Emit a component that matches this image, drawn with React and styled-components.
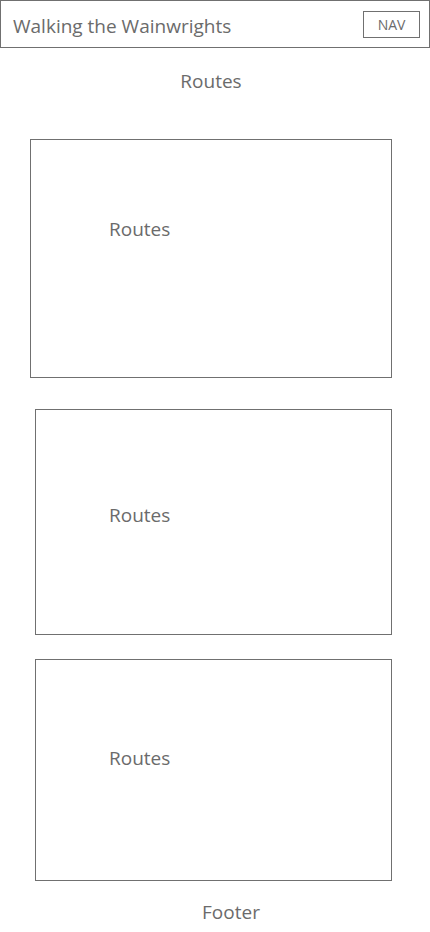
import React from "react";
import styled, { createGlobalStyle } from "styled-components";

const Global = createGlobalStyle`
  html, body { margin: 0; padding: 0; background: #ffffff; }
  body { font-family: "Open Sans", "Noto Sans", "Liberation Sans", sans-serif; color: #6b6b6b; }
  * { box-sizing: border-box; }
`;

const Page = styled.div`
  width: 430px;
  min-height: 932px;
  display: flex;
  flex-direction: column;
`;

const Header = styled.header`
  height: 48px;
  border: 1px solid #707070;
  display: flex;
  align-items: center;
  justify-content: space-between;
  padding: 0 9px 0 12px;
`;

const Title = styled.h1`
  margin: 3px 0 0;
  font-size: 19px;
  font-weight: 400;
  line-height: 24px;
  color: #6b6b6b;
`;

const NavButton = styled.div`
  width: 57px;
  height: 27px;
  border: 1px solid #707070;
  display: flex;
  align-items: center;
  justify-content: center;
  font-size: 14px;
  color: #6b6b6b;
`;

const Heading = styled.h2`
  margin: 21px 0 0;
  padding-right: 8px;
  font-size: 19px;
  font-weight: 400;
  line-height: 24px;
  text-align: center;
  color: #6b6b6b;
`;

const CardList = styled.main`
  display: flex;
  flex-direction: column;
  margin-top: 46px;
`;

const Card = styled.section`
  margin-top: ${(p) => p.$gap}px;
  margin-left: ${(p) => p.$left}px;
  width: ${(p) => 392 - p.$left}px;
  height: ${(p) => p.$height}px;
  border: 1px solid #707070;
  padding-top: ${(p) => p.$textTop}px;
  padding-left: ${(p) => 108 - p.$left}px;
`;

const CardText = styled.div`
  font-size: 19px;
  line-height: 24px;
  color: #6b6b6b;
`;

const Footer = styled.footer`
  margin-top: 19px;
  padding-left: 32px;
  text-align: center;
  font-size: 19px;
  line-height: 24px;
  color: #6b6b6b;
`;

const cards = [
  { gap: 0, left: 30, height: 239, textTop: 77 },
  { gap: 31, left: 35, height: 226, textTop: 93 },
  { gap: 24, left: 35, height: 222, textTop: 86 },
];

export default function App() {
  return (
    <Page>
      <Global />
      <Header>
        <Title>Walking the Wainwrights</Title>
        <NavButton>NAV</NavButton>
      </Header>
      <Heading>Routes</Heading>
      <CardList>
        {cards.map((c, i) => (
          <Card key={i} $gap={c.gap} $left={c.left} $height={c.height} $textTop={c.textTop}>
            <CardText>Routes</CardText>
          </Card>
        ))}
      </CardList>
      <Footer>Footer</Footer>
    </Page>
  );
}
